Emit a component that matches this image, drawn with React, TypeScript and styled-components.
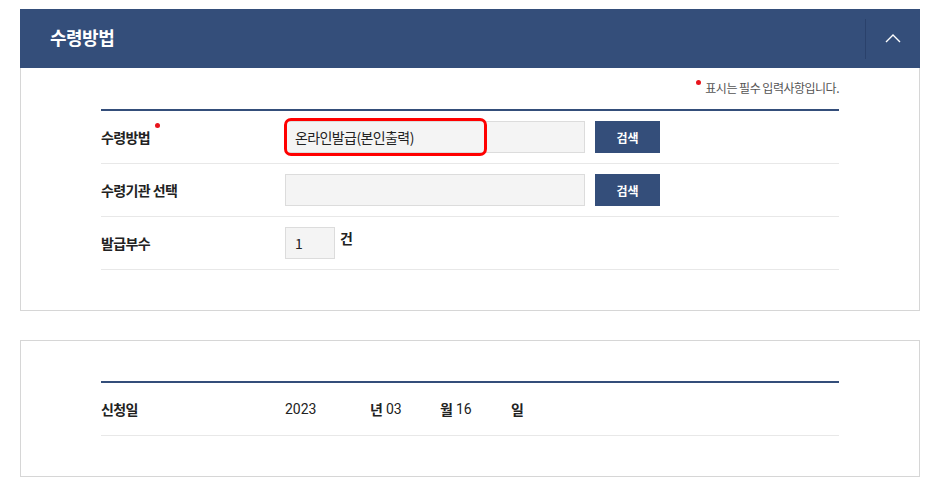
import React from 'react';
import styled, { createGlobalStyle } from 'styled-components';

const GlobalStyle = createGlobalStyle`
    body {
        margin: 0;
        background: #fff;
        font-family: "Noto Sans CJK KR", "Liberation Sans", sans-serif;
        color: #222;
    }
`

const Page = styled.div`
    width: 900px;
    padding: 9px 0 0 20px;
`

const Header = styled.div`
    height: 59px;
    display: flex;
    align-items: center;
    background: #344e7a;
`

const Title = styled.h2`
    flex: 1;
    margin: 0 0 3px;
    padding-left: 30px;
    font-size: 18px;
    font-weight: 700;
    line-height: 1;
    color: #fff;
    letter-spacing: -0.5px;
`

const Toggle = styled.button`
    width: 55px;
    height: 40px;
    padding: 0;
    border: 0;
    border-left: 1px solid #2a416b;
    background: transparent;
    display: flex;
    align-items: center;
    justify-content: center;
`

const Box = styled.section<{ $open?: boolean }>`
    border: 1px solid #d6d6d6;
    border-top-width: ${p => (p.$open ? 0 : 1)}px;
    padding: ${p => (p.$open ? 10 : 40)}px 80px 40px;
    margin-bottom: 29px;
`

const Note = styled.p`
    margin: 0 0 11px;
    text-align: right;
    font-size: 12px;
    line-height: 20px;
    color: #555;
    letter-spacing: -0.5px;
`

const Dot = styled.i`
    display: inline-block;
    width: 5px;
    height: 5px;
    border-radius: 50%;
    background: #e8141c;
    vertical-align: top;
    margin-right: 4px;
    margin-top: 2px;
`

const Table = styled.div`
    border-top: 2px solid #344e7a;
`

const Row = styled.div`
    height: 52px;
    display: flex;
    align-items: center;
    border-bottom: 1px solid #e8e8e8;
`

const Label = styled.div`
    width: 184px;
    font-size: 14px;
    font-weight: 700;
    color: #222;
    letter-spacing: -0.6px;
    display: flex;
    align-items: flex-start;
`

const LabelDot = styled(Dot)`
    margin: -4px 0 0 5px;
`

const FieldWrap = styled.div`
    position: relative;
`

const Field = styled.div<{ $w: number }>`
    box-sizing: border-box;
    width: ${p => p.$w}px;
    height: 32px;
    padding: 0 9px;
    display: flex;
    align-items: center;
    background: #f4f4f4;
    border: 1px solid #dcdcdc;
    font-size: 14px;
    letter-spacing: -0.6px;
    color: #222;
`

const Highlight = styled.span`
    position: absolute;
    left: -1px;
    top: -3px;
    width: 203px;
    height: 38px;
    box-sizing: border-box;
    border: 3px solid #f00;
    border-radius: 7px;
`

const SearchButton = styled.button`
    width: 65px;
    height: 32px;
    margin-left: 10px;
    border: 0;
    background: #344e7a;
    color: #fff;
    font-family: inherit;
    font-size: 12px;
    font-weight: 700;
`

const Unit = styled.span`
    font-size: 14px;
    font-weight: 700;
    margin-left: 5px;
    align-self: flex-start;
    margin-top: 11px;
`

const DateValue = styled.span<{ $w: number }>`
    width: ${p => p.$w}px;
    font-family: "Roboto", "Liberation Sans", sans-serif;
    font-size: 14px;
    color: #222;
`

const DateUnit = styled.span`
    width: 16px;
    font-size: 14px;
    font-weight: 700;
`

const Chevron = () => (
    <svg width="16" height="9" viewBox="0 0 16 9">
        <path d="M1 8 L8 1 L15 8" fill="none" stroke="#fff" strokeWidth="1.4" />
    </svg>
)

const App: React.FC = () => {
    return (
        <>
        <GlobalStyle />
        <Page>
            <Header>
                <Title>수령방법</Title>
                <Toggle aria-label="접기"><Chevron /></Toggle>
            </Header>
            <Box $open>
                <Note><Dot />표시는 필수 입력사항입니다.</Note>
                <Table>
                    <Row>
                        <Label>수령방법<LabelDot /></Label>
                        <FieldWrap>
                            <Field $w={300}>온라인발급(본인출력)</Field>
                            <Highlight />
                        </FieldWrap>
                        <SearchButton>검색</SearchButton>
                    </Row>
                    <Row>
                        <Label>수령기관 선택</Label>
                        <Field $w={300} />
                        <SearchButton>검색</SearchButton>
                    </Row>
                    <Row>
                        <Label>발급부수</Label>
                        <Field $w={50}>1</Field>
                        <Unit>건</Unit>
                    </Row>
                </Table>
            </Box>
            <Box>
                <Table>
                    <Row>
                        <Label>신청일</Label>
                        <DateValue $w={85}>2023</DateValue>
                        <DateUnit>년</DateUnit>
                        <DateValue $w={54}>03</DateValue>
                        <DateUnit>월</DateUnit>
                        <DateValue $w={55}>16</DateValue>
                        <DateUnit>일</DateUnit>
                    </Row>
                </Table>
            </Box>
        </Page>
        </>
    );
}

export default App;
